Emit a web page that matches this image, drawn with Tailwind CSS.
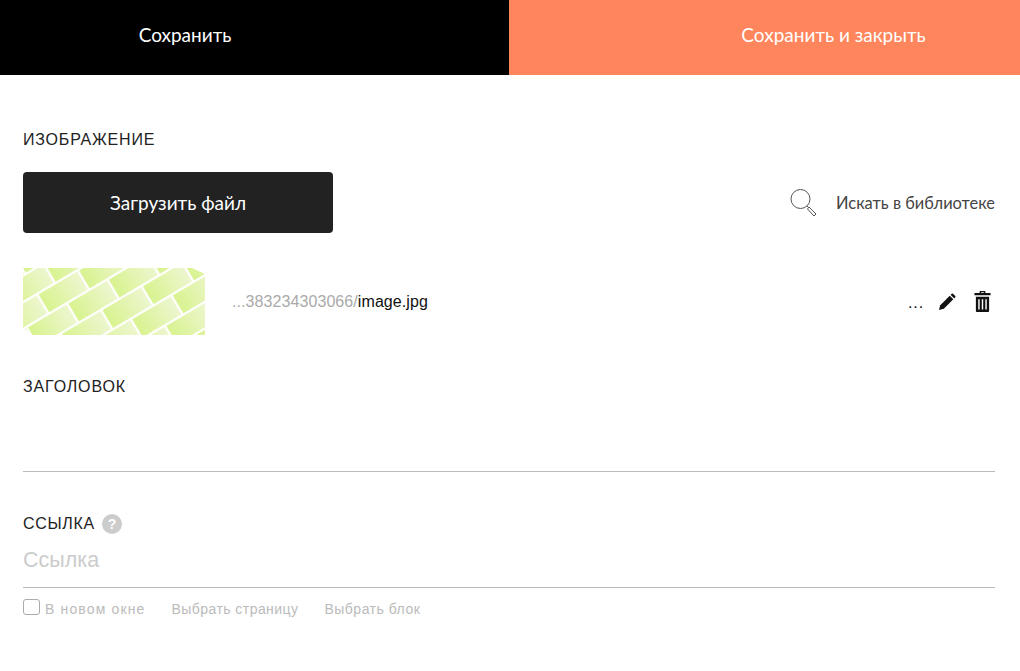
<!DOCTYPE html>
<html><head><meta charset="utf-8"><script src="https://cdn.jsdelivr.net/npm/@tailwindcss/browser@4"></script></head>
<body class="bg-white overflow-hidden font-['Liberation_Sans',sans-serif]">
<div class="w-[1020px] h-[671px]">
  <div class="flex h-[75px] font-['Lato','Noto_Sans',sans-serif] text-[19px]">
    <button class="w-[509px] bg-black text-white pr-[139px] pb-[4px] flex items-center justify-center">Сохранить</button>
    <button class="w-[511px] bg-[#ff855c] text-white flex items-center justify-center pl-[138px] pb-[4px]">Сохранить и закрыть</button>
  </div>
  <div class="px-[23px] w-[1018px]">
    <div class="pt-[56px] text-[16px] leading-[18px] text-[#222] tracking-[0.8px]">ИЗОБРАЖЕНИЕ</div>
    <div class="mt-[23px] flex items-center justify-between">
      <button class="w-[310px] h-[61px] rounded-[4px] bg-[#222] text-white text-[19px] pt-[2px] font-['Lato','Noto_Sans',sans-serif]">Загрузить файл</button>
      <div class="flex items-center gap-[17px] text-[#444] text-[16.4px] font-['Lato','Noto_Sans',sans-serif]">
        <svg width="30" height="30" viewBox="0 0 30 30" fill="none" stroke="#555" stroke-width="1"><circle cx="11.5" cy="11" r="9.5"/><path d="M18 18 L20 20 M20 19 L27 26 L25 28 L18.5 21 Z"/></svg>
        <span class="pt-[2px]">Искать в библиотеке</span>
      </div>
    </div>
    <div class="mt-[35px] flex items-center h-[67px]">
      <svg class="w-[182px] h-[67px]" viewBox="0 0 182 67" aria-hidden="true">
        <defs>
          <linearGradient id="g" x1="0" x2="1" y1="0" y2="0"><stop offset="0" stop-color="#d8f38f"/><stop offset="1" stop-color="#edf6cf"/></linearGradient>
          <pattern id="b" patternUnits="userSpaceOnUse" x="-1" y="29.5" width="47" height="46" patternTransform="rotate(-30.5)">
            <rect width="47" height="46" fill="#fff"/>
            <rect x="1.1" y="1.1" width="44.8" height="20.8" fill="url(#g)"/>
            <rect x="22.1" y="24.1" width="44.8" height="20.8" fill="url(#g)"/>
            <rect x="-24.900" y="24.1" width="44.8" height="20.8" fill="url(#g)"/>
          </pattern>
        </defs>
        <rect width="182" height="67" fill="url(#b)"/>
        <path d="M0 60L9 67H0ZM169 0H182V6Z" fill="#fff"/>
      </svg>
      <div class="ml-[27px] text-[16px] tracking-[0.08px] text-[#aaa]">...383234303066/<span class="text-[#111]">image.jpg</span></div>
      <div class="ml-auto flex items-center text-[#111]">
        <span class="text-[16px] tracking-[0.9px] mr-[14px] mt-[2px]">...</span>
        <svg class="w-[18px] h-[18px] mr-[18px]" viewBox="0 0 20 20" fill="#111"><path d="M1 19l1.500-5.500L13 3l4 4L6.500 17.500z"/><path d="M14 2l1.300-1.200a1 1 0 0 1 1.400 0l2.500 2.500a1 1 0 0 1 0 1.400L18 6z"/></svg>
        <svg class="w-[17px] h-[21px] mr-[4px]" viewBox="0 0 18 22" fill="#111"><path d="M6 0h6v2h5.500v2.500H0.500V2H6zM7.500 1.200V2h3v-.8z"/><path fill-rule="evenodd" d="M2 6h14v15a1 1 0 0 1-1 1H3a1 1 0 0 1-1-1zM4.500 8.500v11h1.500v-11zM8.250 8.500v11h1.500v-11zM12 8.500v11h1.500v-11z"/></svg>
      </div>
    </div>
    <div class="mt-[43px] text-[16px] leading-[18px] text-[#222] tracking-[0.85px]">ЗАГОЛОВОК</div>
    <div class="mt-[75px] border-t border-[#bbb]"></div>
    <div class="mt-[42px] flex items-center gap-[7px] text-[16px] leading-[20px] text-[#222]">
      <span class="tracking-[0.7px]">ССЫЛКА</span>
      <span class="w-[20px] h-[20px] rounded-full bg-[#ccc] text-white text-[14px] font-bold flex items-center justify-center">?</span>
    </div>
    <div class="mt-[9px] text-[21.500px] leading-[34px] h-[34px] text-[#ccc]">Ссылка</div>
    <div class="mt-[10px] border-t border-[#bbb]"></div>
    <div class="mt-[11px] flex items-center text-[14px] text-[#bbb]">
      <span class="w-[17px] h-[16px] rounded-[3px] border border-[#aaa] -mt-[6px] mr-[5px]"></span>
      <span class="tracking-[1.15px]">В новом окне</span>
      <span class="ml-[26px] tracking-[0.44px]">Выбрать страницу</span>
      <span class="ml-[26px] tracking-[0.5px]">Выбрать блок</span>
    </div>
  </div>
</div>
</body></html>
